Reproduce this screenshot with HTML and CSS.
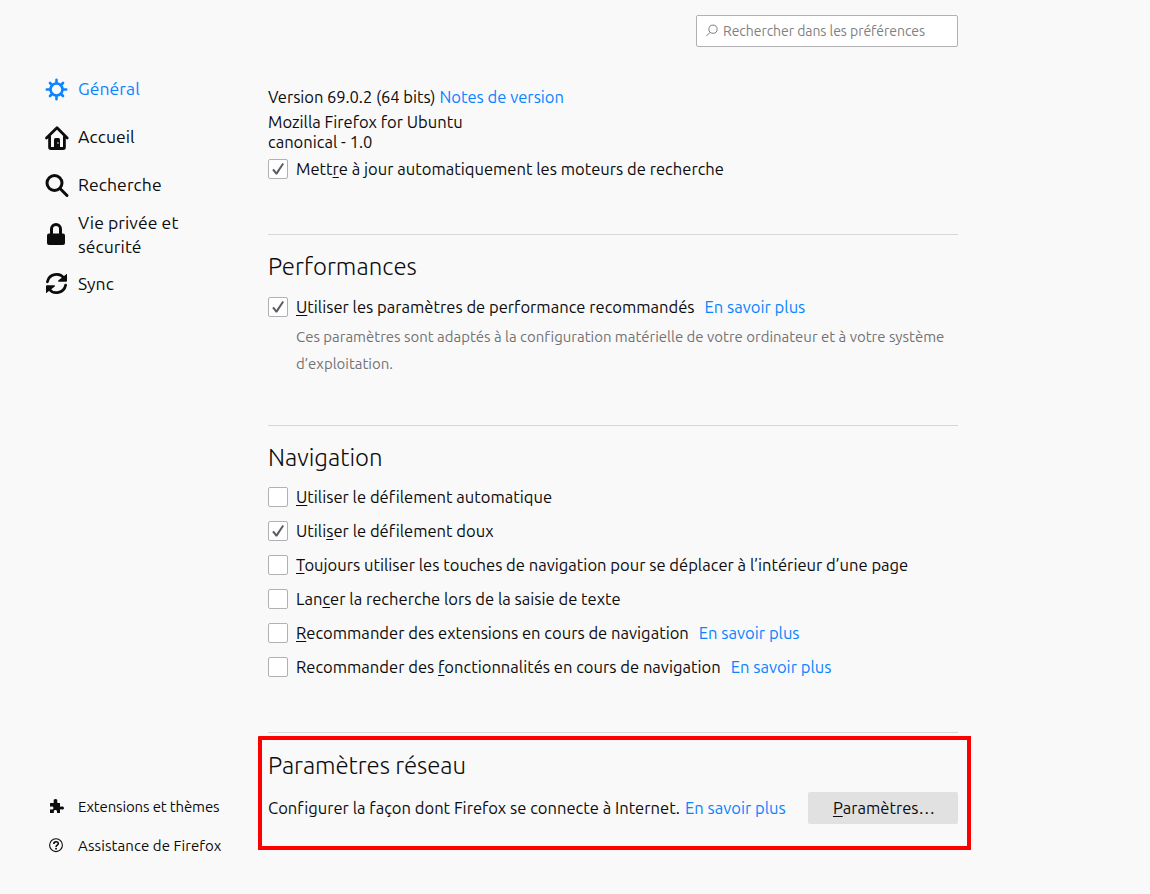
FILE: index.html
```
<!DOCTYPE html>
<html lang="fr">
<head>
<meta charset="utf-8">
<title>Préférences</title>
<link rel="stylesheet" href="styles.css">
</head>
<body>
<div class="page">
  <aside class="sidebar">
    <nav class="categories">
      <a class="category selected">
        <svg class="icon" viewBox="0 0 24 24"><g fill="none" stroke="currentColor" stroke-width="2.6"><circle cx="12.500" cy="12.500" r="6"/><path stroke-linecap="round" d="M12.500 5.500V2.800M12.500 22.200v-2.700M5.500 12.500H2.800M22.200 12.500h-2.700M7.500 7.500L6 6M19 19l-1.500-1.500M7.500 17.500L6 19M19 6l-1.500 1.500"/></g></svg>
        <span>Général</span></a>
      <a class="category">
        <svg class="icon" viewBox="0 0 24 24"><g fill="none" stroke="currentColor" stroke-width="2.800" stroke-linecap="round" stroke-linejoin="round"><path d="M2.500 13L13 2.800 23.200 13"/><path d="M5.600 12v10.300q0 1.200 1.200 1.200h12.400q1.200 0 1.200-1.200V12"/></g><path fill="currentColor" d="M10 23v-8.500q0-1.500 1.500-1.500h3q1.500 0 1.500 1.500V23z"/><circle cx="14" cy="18" r=".8" fill="#f9f9fa"/></svg>
        <span>Accueil</span></a>
      <a class="category">
        <svg class="icon" viewBox="0 0 24 24"><g fill="none" stroke="currentColor" stroke-width="3" stroke-linecap="round"><circle cx="10.500" cy="10" r="7.500"/><path d="M16 15.500l7 7"/></g></svg>
        <span>Recherche</span></a>
      <a class="category tall">
        <svg class="icon" viewBox="0 0 24 24"><rect x="3" y="10.500" width="18" height="11.500" rx="2" fill="currentColor"/><path fill="none" stroke="currentColor" stroke-width="3" d="M7.500 12V6a4.500 4.500 0 0 1 9 0V12"/></svg>
        <span>Vie privée et<br>sécurité</span></a>
      <a class="category">
        <svg class="icon" viewBox="0 0 24 24"><g fill="none" stroke="currentColor" stroke-width="2.800" stroke-linecap="round"><path d="M3.400 9.800A9.400 9.400 0 0 1 20 6"/><path d="M21.600 13.200A9.400 9.400 0 0 1 5 17"/></g><path fill="currentColor" d="M23 1.800v7a1 1 0 0 1-1 1h-7.500q-1-.8 0-1.500zM2 21.200v-7a1 1 0 0 1 1-1h7.500q1 .8 0 1.500z"/></svg>
        <span>Sync</span></a>
    </nav>
    <div class="help">
      <a class="help-link">
        <svg class="small-icon" viewBox="0 0 16 16"><path fill="currentColor" d="M2.500 4H5q1 0 .8-1.200C5.200 1.200 6 0 7.500 0s2.300 1.200 1.700 2.800Q9 4 10 4h2v3q0 .9 1 .7c1.500-.7 3 0 3 1.300s-1.500 2-3 1.300q-1-.2-1 .7v3H9v-1.500c0-2-3.200-2-3.200 0V14H2v-3q0-.8 1-.6c1.400.5 2.500-.3 2.500-1.400S4.400 7.100 3 7.600q-1 .3-1-.6V4.500q0-.5.500-.5z"/></svg>
        <span class="tight">Extensions et thèmes</span></a>
      <a class="help-link">
        <svg class="small-icon" viewBox="0 0 16 16"><g fill="none" stroke="currentColor"><circle cx="8" cy="7.200" r="6.400" stroke-width="1.100"/><path stroke-width="1.600" d="M5.800 5.900c0-2.900 4.500-2.900 4.500-.3C10.300 7.200 8 7 8 8.900"/></g><rect x="7.200" y="9.900" width="1.700" height="1.600" fill="currentColor"/></svg>
        <span class="loose">Assistance de Firefox</span></a>
    </div>
  </aside>
  <main class="content">
    <div class="search">
      <svg class="search-icon" viewBox="0 0 14 14"><g fill="none" stroke="#808080" stroke-width="1"><circle cx="8" cy="5.200" r="4.100"/><path d="M5 8.400L1.300 12.100"/></g></svg>
      <span>Rechercher dans les préférences</span>
    </div>
    <section class="updates">
      <div class="version"><span class="version-number">Version 69.0.2 (64 bits)</span><a class="link">Notes de version</a></div>
      <div class="distribution">Mozilla Firefox for Ubuntu<br>canonical - 1.0</div>
      <label class="row"><span class="box checked"></span><span>Mett<u>r</u>e à jour automatiquement les moteurs de recherche</span></label>
    </section>
    <section class="group performance">
      <h2>Performances</h2>
      <label class="row"><span class="box checked"></span><span><u>U</u>tiliser les paramètres de performance recommandés</span><a class="link more">En savoir plus</a></label>
      <p class="description">Ces paramètres sont adaptés à la configuration matérielle de votre ordinateur et à votre système<br>d’exploitation.</p>
    </section>
    <section class="group">
      <h2>Navigation</h2>
      <label class="row"><span class="box"></span><span><u>U</u>tiliser le défilement automatique</span></label>
      <label class="row"><span class="box checked"></span><span>Utili<u>s</u>er le défilement doux</span></label>
      <label class="row"><span class="box"></span><span><u>T</u>oujours utiliser les touches de navigation pour se déplacer à l’intérieur d’une page</span></label>
      <label class="row"><span class="box"></span><span>Lan<u>c</u>er la recherche lors de la saisie de texte</span></label>
      <label class="row"><span class="box"></span><span><u>R</u>ecommander des extensions en cours de navigation</span><a class="link more">En savoir plus</a></label>
      <label class="row"><span class="box"></span><span>Recommander des <u>f</u>onctionnalités en cours de navigation</span><a class="link more">En savoir plus</a></label>
    </section>
    <section class="group network">
      <h2>Paramètres réseau</h2>
      <div class="network-row"><span>Configurer la façon dont Firefox se connecte à Internet.</span><a class="link">En savoir plus</a><button class="button"><u>P</u>aramètres…</button></div>
      <div class="highlight"></div>
    </section>
  </main>
</div>
</body>
</html>
```
FILE: styles.css
```
* { box-sizing: border-box; }
body {
  margin: 0;
  background: #f9f9fa;
  color: #0c0c0d;
  font: 16.57px/24px "Ubuntu", "Noto Sans", sans-serif;
  font-variant-ligatures: none;
}
.page { display: flex; width: 1150px; height: 894px; overflow: hidden; }
.sidebar { display: flex; flex-direction: column; justify-content: space-between; width: 268px; padding: 65px 0 29px 44px; }
.categories, .help { display: flex; flex-direction: column; }
.help { gap: 1px; }
.category { display: flex; align-items: center; gap: 10px; height: 48px; font-size: 17.6px; letter-spacing: 0.06px; }
.category.tall { height: 51px; }
.selected { color: #0a84ff; }
.icon { width: 24px; height: 24px; flex: none; overflow: visible; }
.help-link { display: flex; align-items: center; gap: 14px; height: 38px; padding-left: 4px; font-size: 15px; }
.tight { letter-spacing: -0.15px; }
.loose { letter-spacing: 0.08px; }
.small-icon { width: 16px; height: 16px; flex: none; }
.content { display: flex; flex-direction: column; width: 690px; padding-top: 15px; white-space: nowrap; }
.search { display: flex; align-items: center; align-self: flex-end; gap: 4px; width: 262px; height: 32px; padding-left: 8px; background: #fff; border: 1px solid #b1b1b3; border-radius: 2px; color: #808080; font-size: 14px; letter-spacing: -0.05px; }
.search-icon { width: 14px; height: 14px; }
.updates { margin-top: 38px; }
.version { display: flex; gap: 4px; }
.version-number { letter-spacing: -0.06px; }
.distribution { margin-top: 3px; line-height: 20px; }
.link { color: #0a84ff; }
.row { display: flex; align-items: center; height: 34px; }
.box { display: flex; width: 20px; height: 20px; margin-right: 8px; background: #fff; border: 1px solid #b1b1b3; border-radius: 2px; }
.checked::before { content: ""; width: 18px; height: 18px; background: #5a5b66; clip-path: polygon(3.2px 10px, 4.9px 8.8px, 7.3px 12px, 13.4px 3px, 15px 4px, 8.2px 14.600px, 6.800px 14.600px); }
.more { margin-left: 10px; }
.group { margin-top: 48px; padding-top: 16px; border-top: 1px solid #d7d7db; }
h2 { margin: 0 0 6px; font-size: 24px; line-height: 32px; font-weight: 300; }
.performance h2 { margin-bottom: 7px; letter-spacing: 0.06px; }
.description { margin: -1px 0 0 28px; color: #737373; font-size: 14.96px; line-height: 27px; }
u { text-decoration: underline; text-decoration-thickness: 1px; text-underline-offset: 2px; text-decoration-skip-ink: none; }
.network { position: relative; }
.network h2 { margin: 1px 0 10px; letter-spacing: -0.06px; }
.network-row { display: flex; align-items: center; gap: 5px; }
.button { width: 150px; height: 32px; margin-left: auto; padding: 0 0 0 2px; border: 0; border-radius: 2px; background: #e1e1e2; color: inherit; font: inherit; }
.highlight { position: absolute; left: -10px; top: 3px; width: 713px; height: 114px; border: 4px solid #f00; border-top-left-radius: 1px; }
```
